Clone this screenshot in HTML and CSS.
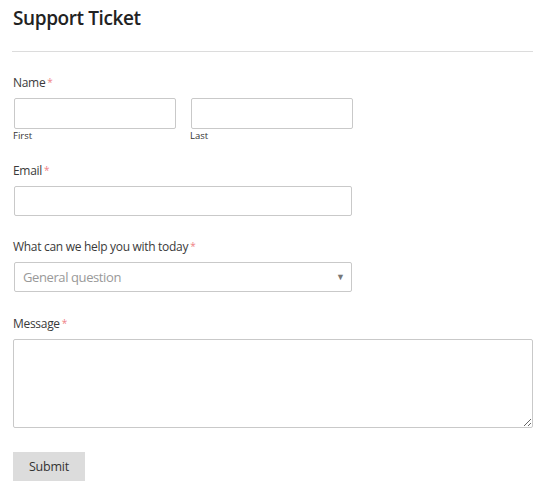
FILE: index.html
```html
<!DOCTYPE html>
<html lang="en">
<head>
    <meta charset="UTF-8">
    <meta name="viewport" content="width=device-width, initial-scale=1.0">
    <title>Support Ticket</title>
    <link rel="stylesheet" href="styles.css">
</head>
<body>
    <div class="container">
        <h1>Support Ticket</h1>
        <hr class="divider">

        <form class="ticket-form">
            <div class="field field-name">
                <label class="label">Name<span class="req">*</span></label>
                <div class="name-row">
                    <div class="name-part">
                        <input type="text" class="input input-name">
                        <span class="sublabel">First</span>
                    </div>
                    <div class="name-part">
                        <input type="text" class="input input-name">
                        <span class="sublabel">Last</span>
                    </div>
                </div>
            </div>

            <div class="field">
                <label class="label">Email<span class="req">*</span></label>
                <input type="email" class="input input-wide">
            </div>

            <div class="field field-topic">
                <label class="label">What can we help you with today<span class="req">*</span></label>
                <div class="select-wrap">
                    <select class="input input-wide select">
                        <option>General question</option>
                    </select>
                    <span class="select-arrow">&#9660;</span>
                </div>
            </div>

            <div class="field field-message">
                <label class="label">Message<span class="req">*</span></label>
                <textarea class="input textarea"></textarea>
            </div>

            <button type="button" class="submit">Submit</button>
        </form>
    </div>
</body>
</html>
```

FILE: styles.css
```css
body {
    margin: 0;
    padding: 0;
    background-color: #fff;
    font-family: "Open Sans", Arial, sans-serif;
    color: #333;
}

.container {
    padding: 4px 12px 0 13px;
}

h1 {
    margin: 0;
    font-size: 19px;
    line-height: 28px;
    font-weight: 600;
    letter-spacing: -0.4px;
    color: #222;
}

.divider {
    margin: 19px 0 0 -1px;
    border: none;
    border-top: 1px solid #dcdcdc;
}

.ticket-form {
    padding-top: 22px;
}

.field {
    margin-bottom: 22px;
}

.field-name {
    margin-bottom: 19px;
}

.field-topic {
    margin-bottom: 23px;
}

.field-message {
    margin-bottom: 24px;
}

.label {
    display: block;
    font-size: 12px;
    line-height: 18px;
    letter-spacing: -0.3px;
    color: #3a3a3a;
    margin-bottom: 6px;
}

.req {
    font-size: 10px;
    line-height: 0;
    vertical-align: 1px;
    color: #ef7f86;
    margin-left: 2px;
}

.name-row {
    display: flex;
    gap: 14px;
}

.name-part {
    display: flex;
    flex-direction: column;
}

.sublabel {
    font-size: 9.5px;
    line-height: 14px;
    color: #333;
}

.input {
    box-sizing: border-box;
    margin: 0 0 0 1px;
    border: 1px solid #c9c9c9;
    border-radius: 2px;
    background-color: #fff;
    font-family: "Open Sans", Arial, sans-serif;
}

.input-name {
    width: 162px;
    height: 31px;
}

.input-wide {
    width: 338px;
    height: 30px;
}

.select-wrap {
    position: relative;
    width: 340px;
}

.select {
    appearance: none;
    -webkit-appearance: none;
    padding: 0 8px;
    font-size: 13px;
    letter-spacing: -0.4px;
    color: #999;
}

.select-arrow {
    position: absolute;
    right: 8px;
    top: 8px;
    font-size: 9px;
    color: #777;
    pointer-events: none;
}

.textarea {
    display: block;
    margin-left: 0;
    width: 520px;
    height: 89px;
    resize: vertical;
}

.submit {
    width: 72px;
    height: 29px;
    border: none;
    border-radius: 0;
    background-color: #dcdcdc;
    font-family: "Open Sans", Arial, sans-serif;
    font-size: 12.5px;
    letter-spacing: -0.2px;
    color: #333;
    cursor: pointer;
}
```
